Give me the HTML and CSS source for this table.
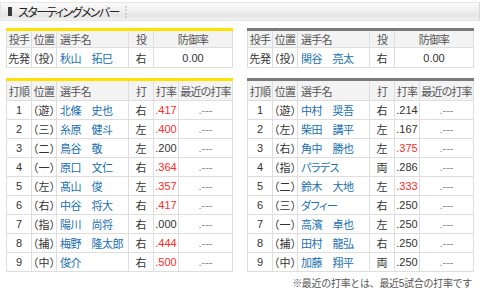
FILE: index.html
```html
<!DOCTYPE html>
<html lang="ja">
<head>
<meta charset="utf-8">
<link rel="stylesheet" href="styles.css">
</head>
<body>
<div class="page-header">
  <span class="mark"></span>
  <span class="title">スターティングメンバー</span>
  <span class="sep"></span>
</div>
<div class="columns">
  <div class="col">
    <div class="block yellow">
      <table class="tbl pitch">
        <colgroup><col class="c1"><col class="c2"><col class="c3"><col class="c4"><col class="c5w"></colgroup>
        <tr class="head first"><th>投手</th><th>位置</th><th class="l">選手名</th><th>投</th><th>防御率</th></tr>
        <tr class="prow"><td>先発</td><td class="pos">（投）</td><td class="l name">秋山　拓巳</td><td>右</td><td class="num">0.00</td></tr>
      </table>
    </div>
    <div class="block yellow bat">
      <table class="tbl">
        <colgroup><col class="c1"><col class="c2"><col class="c3"><col class="c4"><col class="c5"><col class="c6"></colgroup>
        <tr class="head"><th>打順</th><th>位置</th><th class="l">選手名</th><th>打</th><th>打率</th><th>最近の打率</th></tr>
        <tr><td class="num">1</td><td class="pos">（遊）</td><td class="l name">北條　史也</td><td>右</td><td class="num red">.417</td><td class="num dim">.---</td></tr>
        <tr><td class="num">2</td><td class="pos">（三）</td><td class="l name">糸原　健斗</td><td>左</td><td class="num red">.400</td><td class="num dim">.---</td></tr>
        <tr><td class="num">3</td><td class="pos">（二）</td><td class="l name">鳥谷　敬</td><td>左</td><td class="num">.200</td><td class="num dim">.---</td></tr>
        <tr><td class="num">4</td><td class="pos">（一）</td><td class="l name">原口　文仁</td><td>右</td><td class="num red">.364</td><td class="num dim">.---</td></tr>
        <tr><td class="num">5</td><td class="pos">（左）</td><td class="l name">髙山　俊</td><td>左</td><td class="num red">.357</td><td class="num dim">.---</td></tr>
        <tr><td class="num">6</td><td class="pos">（右）</td><td class="l name">中谷　将大</td><td>右</td><td class="num red">.417</td><td class="num dim">.---</td></tr>
        <tr><td class="num">7</td><td class="pos">（指）</td><td class="l name">陽川　尚将</td><td>右</td><td class="num">.000</td><td class="num dim">.---</td></tr>
        <tr><td class="num">8</td><td class="pos">（捕）</td><td class="l name">梅野　隆太郎</td><td>右</td><td class="num red">.444</td><td class="num dim">.---</td></tr>
        <tr><td class="num">9</td><td class="pos">（中）</td><td class="l name">俊介</td><td>右</td><td class="num red">.500</td><td class="num dim">.---</td></tr>
      </table>
    </div>
  </div>
  <div class="col">
    <div class="block grey">
      <table class="tbl pitch">
        <colgroup><col class="c1"><col class="c2"><col class="c3"><col class="c4"><col class="c5w"></colgroup>
        <tr class="head first"><th>投手</th><th>位置</th><th class="l">選手名</th><th>投</th><th>防御率</th></tr>
        <tr class="prow"><td>先発</td><td class="pos">（投）</td><td class="l name">関谷　亮太</td><td>右</td><td class="num">0.00</td></tr>
      </table>
    </div>
    <div class="block grey bat">
      <table class="tbl">
        <colgroup><col class="c1"><col class="c2"><col class="c3"><col class="c4"><col class="c5"><col class="c6"></colgroup>
        <tr class="head"><th>打順</th><th>位置</th><th class="l">選手名</th><th>打</th><th>打率</th><th>最近の打率</th></tr>
        <tr><td class="num">1</td><td class="pos">（遊）</td><td class="l name">中村　奨吾</td><td>右</td><td class="num">.214</td><td class="num dim">.---</td></tr>
        <tr><td class="num">2</td><td class="pos">（左）</td><td class="l name">柴田　講平</td><td>左</td><td class="num">.167</td><td class="num dim">.---</td></tr>
        <tr><td class="num">3</td><td class="pos">（右）</td><td class="l name">角中　勝也</td><td>左</td><td class="num red">.375</td><td class="num dim">.---</td></tr>
        <tr><td class="num">4</td><td class="pos">（指）</td><td class="l name">パラデス</td><td>両</td><td class="num">.286</td><td class="num dim">.---</td></tr>
        <tr><td class="num">5</td><td class="pos">（二）</td><td class="l name">鈴木　大地</td><td>左</td><td class="num red">.333</td><td class="num dim">.---</td></tr>
        <tr><td class="num">6</td><td class="pos">（三）</td><td class="l name">ダフィー</td><td>右</td><td class="num">.250</td><td class="num dim">.---</td></tr>
        <tr><td class="num">7</td><td class="pos">（一）</td><td class="l name">高濱　卓也</td><td>左</td><td class="num">.250</td><td class="num dim">.---</td></tr>
        <tr><td class="num">8</td><td class="pos">（捕）</td><td class="l name">田村　龍弘</td><td>右</td><td class="num">.250</td><td class="num dim">.---</td></tr>
        <tr><td class="num">9</td><td class="pos">（中）</td><td class="l name">加藤　翔平</td><td>両</td><td class="num">.250</td><td class="num dim">.---</td></tr>
      </table>
    </div>
    <p class="note">※最近の打率とは、最近5試合の打率です</p>
  </div>
</div>
</body>
</html>
```

FILE: styles.css
```css
html, body {
  margin: 0;
  padding: 0;
  background: #fff;
}
body {
  width: 480px;
  font-family: "Liberation Sans", "Noto Sans CJK JP", sans-serif;
  color: #333;
}
.page-header {
  margin-top: 2px;
  height: 17px;
  border: 1px solid #e6e6e6;
  border-right-color: #d8d8d8;
  background: linear-gradient(#fafafa, #f0f0f0 45%, #e4e4e4 75%, #f2f2f2);
  display: flex;
  align-items: center;
  padding-left: 7px;
}
.mark {
  width: 4px;
  height: 9px;
  background: #3a3a3a;
  margin-right: 6px;
}
.title {
  font-family: "Noto Sans CJK JP", sans-serif;
  font-size: 12px;
  font-feature-settings: "palt";
  letter-spacing: -1.6px;
  color: #222;
  line-height: 17px;
}
.sep {
  width: 0;
  height: 12px;
  border-left: 2px dotted #d0d0d0;
  margin-left: 6px;
}
.columns {
  display: flex;
  gap: 14px;
  padding: 0 6px;
  margin-top: 7px;
}
.col {
  width: 227px;
}
.block {
  border-top: 3px solid #ffe100;
}
.block.grey {
  border-top-color: #7a7a7a;
}
.block.bat {
  margin-top: 10px;
}
.tbl {
  width: 100%;
  border-collapse: collapse;
  table-layout: fixed;
  font-size: 11px;
}
.c1 { width: 25px; }
.c2 { width: 25px; }
.c3 { width: 72px; }
.c4 { width: 25px; }
.c5 { width: 25px; }
.c6 { width: auto; }
.c5w { width: auto; }
.tbl th, .tbl td {
  border: 1px solid #dedede;
  padding: 0;
  text-align: center;
  white-space: nowrap;
  overflow: hidden;
  font-weight: normal;
  font-feature-settings: "palt";
}
.tbl th {
  letter-spacing: -0.8px;
}
.tbl tr:first-child th {
  border-top: none;
}
.tbl th {
  background: #f3f3f3;
  color: #555;
  height: 19px;
}
.tbl tr.first th {
  height: 16px;
}
.tbl td {
  height: 18px;
  background: #fff;
  letter-spacing: -0.2px;
}
.tbl td.pos {
  letter-spacing: 0.3px;
  text-indent: 0.3px;
}
.tbl tr.prow td {
  height: 19px;
}
.tbl .l {
  text-align: left;
  padding-left: 3px;
}
.tbl .name {
  color: #2070b0;
  letter-spacing: -0.5px;
}
.tbl .num {
  letter-spacing: 0;
}
.red {
  color: #ff2a2a;
}
.dim {
  color: #888;
}
.note {
  margin: 3px 0 0;
  text-align: right;
  font-size: 10px;
  color: #555;
  letter-spacing: -0.3px;
  padding-right: 2px;
}
```
